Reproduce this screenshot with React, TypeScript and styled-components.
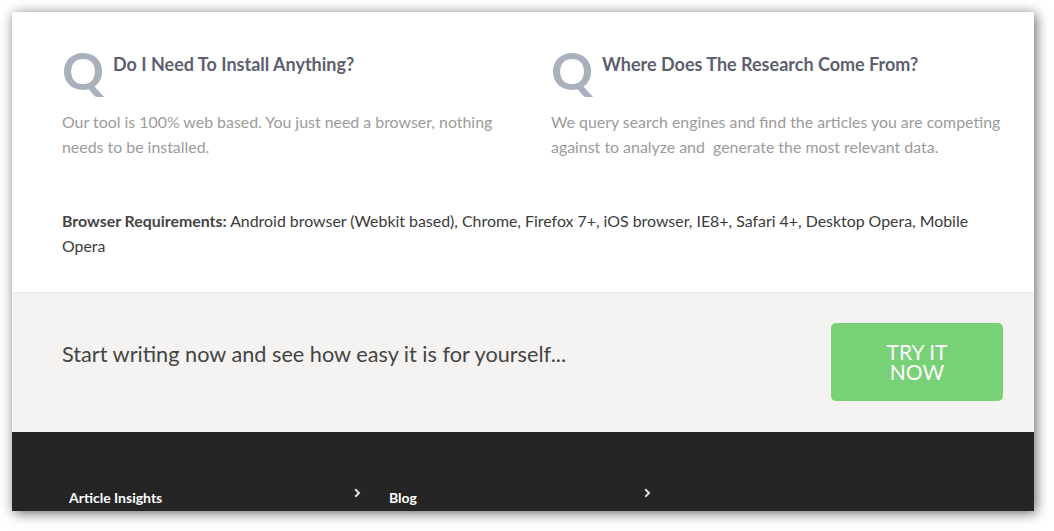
import React from "react";
import styled, { createGlobalStyle } from "styled-components";

const Global = createGlobalStyle`
  html, body { margin: 0; padding: 0; background: #ffffff; }
  body { font-family: Lato, "Open Sans", sans-serif; -webkit-font-smoothing: antialiased; }
  * { box-sizing: border-box; }
`;

const Page = styled.div`
  padding: 12px;
  width: 1054px;
  height: 531px;
  overflow: hidden;
`;

const Frame = styled.div`
  width: 1022px;
  height: 499px;
  overflow: hidden;
  background: #ffffff;
  box-shadow: 2px 2px 12px rgba(0, 0, 0, 0.6);
  display: flex;
  flex-direction: column;
`;

const FaqSection = styled.section`
  padding: 31px 23px 34px 50px;
`;

const FaqGrid = styled.div`
  display: grid;
  grid-template-columns: 460px 460px;
  column-gap: 29px;
`;

const FaqItem = styled.div`
  display: flex;
  flex-direction: column;
`;

const FaqHead = styled.div`
  display: flex;
  align-items: flex-start;
  gap: 12px;
`;

const QMark = styled.span`
  display: block;
  flex-shrink: 0;
  width: 39px;
  font-size: 52px;
  line-height: 54px;
  font-weight: 700;
  color: #a9b1bc;
`;

const Question = styled.h3`
  margin: 11px 0 0;
  font-size: 18px;
  line-height: 1.2;
  font-weight: 700;
  color: #5d5f6f;
`;

const Answer = styled.p`
  margin: 12px 0 0;
  font-size: 15.9px;
  line-height: 25px;
  color: #9b9b9b;
`;

const Requirements = styled.p`
  margin: 49px 0 0;
  font-size: 15.9px;
  line-height: 25px;
  color: #3a3a3a;
  max-width: 930px;
`;

const Label = styled.strong`
  font-weight: 700;
  color: #444;
`;

const CtaBand = styled.section`
  height: 140px;
  flex-shrink: 0;
  background: #f4f3f1;
  border-top: 1px solid #ecebea;
  display: flex;
  align-items: center;
  justify-content: space-between;
  padding: 0 31px 0 50px;
`;

const CtaText = styled.p`
  margin: 0 0 18px;
  font-size: 21.7px;
  color: #444444;
`;

const CtaButton = styled.button`
  width: 172px;
  height: 78px;
  border: none;
  border-radius: 5px;
  background: #78d176;
  color: #ffffff;
  font-family: Lato, sans-serif;
  font-size: 21px;
  line-height: 20px;
  padding: 0 40px;
  text-transform: uppercase;
  cursor: pointer;
  margin-bottom: 1px;
`;

const Footer = styled.footer`
  flex: 1;
  background: #252525;
  padding: 56px 0 0 57px;
  display: flex;
`;

const FooterCol = styled.div<{ $w: number }>`
  width: ${(p) => p.$w}px;
  display: flex;
  justify-content: space-between;
  align-items: flex-start;
`;

const FooterTitle = styled.h4`
  margin: 1px 0 0;
  font-size: 14px;
  line-height: 17px;
  font-weight: 700;
  color: #ffffff;
`;

const Chevron = styled.svg`
  width: 7px;
  height: 10px;
  margin: 0 28px 0 0;
`;

const Arrow = () => (
  <Chevron viewBox="0 0 7 10">
    <polyline points="1.2,1.2 5,5 1.2,8.8" fill="none" stroke="#e0e0e0" strokeWidth="2" />
  </Chevron>
);

export default function App() {
  return (
    <>
      <Global />
      <Page>
        <Frame>
          <FaqSection>
            <FaqGrid>
              <FaqItem>
                <FaqHead>
                  <QMark>Q</QMark>
                  <Question>Do I Need To Install Anything?</Question>
                </FaqHead>
                <Answer>
                  Our tool is 100% web based. You just need a browser, nothing needs to be installed.
                </Answer>
              </FaqItem>
              <FaqItem>
                <FaqHead>
                  <QMark>Q</QMark>
                  <Question>Where Does The Research Come From?</Question>
                </FaqHead>
                <Answer>
                  We query search engines and find the articles you are competing against to analyze and&nbsp; generate the most relevant data.
                </Answer>
              </FaqItem>
            </FaqGrid>
            <Requirements>
              <Label>Browser Requirements:</Label> Android browser (Webkit based), Chrome, Firefox 7+, iOS browser, IE8+, Safari 4+, Desktop Opera, Mobile Opera
            </Requirements>
          </FaqSection>
          <CtaBand>
            <CtaText>Start writing now and see how easy it is for yourself...</CtaText>
            <CtaButton>Try it now</CtaButton>
          </CtaBand>
          <Footer>
            <FooterCol $w={320}>
              <FooterTitle>Article Insights</FooterTitle>
              <Arrow />
            </FooterCol>
            <FooterCol $w={290}>
              <FooterTitle>Blog</FooterTitle>
              <Arrow />
            </FooterCol>
          </Footer>
        </Frame>
      </Page>
    </>
  );
}
